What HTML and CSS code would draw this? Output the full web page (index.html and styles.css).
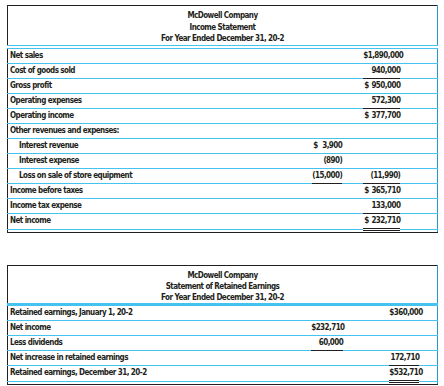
FILE: index.html
```html
<!DOCTYPE html>
<html lang="en">
<head>
    <meta charset="UTF-8">
    <meta name="viewport" content="width=device-width, initial-scale=1.0">
    <title>McDowell Company Statements</title>
    <link rel="stylesheet" href="styles.css">
</head>
<body>
    <table class="statement income">
        <colgroup>
            <col class="col-label">
            <col class="col-mid">
            <col class="col-gap">
            <col class="col-right">
            <col class="col-end">
        </colgroup>
        <thead>
            <tr>
                <th colspan="5" class="heading">
                    McDowell Company<br>
                    Income Statement<br>
                    For Year Ended December 31, 20-2
                </th>
            </tr>
        </thead>
        <tbody>
            <tr><td>Net sales</td><td></td><td></td><td class="amt">$1,890,000</td><td></td></tr>
            <tr><td>Cost of goods sold</td><td></td><td></td><td class="amt rule">940,000</td><td></td></tr>
            <tr><td>Gross profit</td><td></td><td></td><td class="amt"><span class="cur">$</span>950,000</td><td></td></tr>
            <tr><td>Operating expenses</td><td></td><td></td><td class="amt rule">572,300</td><td></td></tr>
            <tr><td>Operating income</td><td></td><td></td><td class="amt"><span class="cur">$</span>377,700</td><td></td></tr>
            <tr><td>Other revenues and expenses:</td><td></td><td></td><td></td><td></td></tr>
            <tr><td class="indent">Interest revenue</td><td class="amt"><span class="cur">$</span>3,900</td><td></td><td></td><td></td></tr>
            <tr><td class="indent">Interest expense</td><td class="amt">(890)</td><td></td><td></td><td></td></tr>
            <tr><td class="indent">Loss on sale of store equipment</td><td class="amt rule">(15,000)</td><td></td><td class="amt rule">(11,990)</td><td></td></tr>
            <tr><td>Income before taxes</td><td></td><td></td><td class="amt"><span class="cur">$</span>365,710</td><td></td></tr>
            <tr><td>Income tax expense</td><td></td><td></td><td class="amt rule">133,000</td><td></td></tr>
            <tr><td>Net income</td><td></td><td></td><td class="amt double"><span class="cur">$</span>232,710</td><td></td></tr>
            <tr class="tail"><td colspan="5"></td></tr>
        </tbody>
    </table>

    <table class="statement retained">
        <colgroup>
            <col class="col-label">
            <col class="col-mid">
            <col class="col-gap">
            <col class="col-right">
            <col class="col-end">
        </colgroup>
        <thead>
            <tr>
                <th colspan="5" class="heading">
                    McDowell Company<br>
                    Statement of Retained Earnings<br>
                    For Year Ended December 31, 20-2
                </th>
            </tr>
        </thead>
        <tbody>
            <tr><td>Retained earnings, January 1, 20-2</td><td></td><td></td><td class="amt">$360,000</td><td></td></tr>
            <tr><td>Net income</td><td class="amt">$232,710</td><td></td><td></td><td></td></tr>
            <tr><td>Less dividends</td><td class="amt rule">60,000</td><td></td><td></td><td></td></tr>
            <tr><td>Net increase in retained earnings</td><td></td><td></td><td class="amt rule">172,710</td><td></td></tr>
            <tr><td>Retained earnings, December 31, 20-2</td><td></td><td></td><td class="amt double">$532,710</td><td></td></tr>
            <tr class="tail"><td colspan="5"></td></tr>
        </tbody>
    </table>
</body>
</html>
```

FILE: styles.css
```css
* {
    margin: 0;
    padding: 0;
    box-sizing: border-box;
}

body {
    background-color: #fff;
    color: #231f20;
    font-family: "DejaVu Sans Condensed", "DejaVu Sans", sans-serif;
    font-weight: bold;
    font-size: 8px;
    letter-spacing: -0.55px;
    padding: 5px 0 0 7px;
}

.statement {
    width: 431px;
    border-collapse: collapse;
    table-layout: fixed;
    border: 1px solid #231f20;
    border-right-color: #2d93cf;
}

.retained {
    margin-top: 32px;
}

.statement td {
    height: 15px;
    padding: 0 0 0 2px;
    border-bottom: 1px solid #45c3ef;
    white-space: nowrap;
    line-height: 14px;
}

.statement td.indent {
    padding-left: 11px;
}

.statement td.amt {
    text-align: right;
    padding: 0;
}

.statement td.rule {
    border-bottom-color: #231f20;
}

.statement td.double {
    border-bottom: 3px double #231f20;
}

.statement tr.tail td {
    height: 3px;
    border-bottom: none;
}

.cur {
    float: left;
    padding-left: 1px;
}

.heading {
    font-weight: bold;
    text-align: center;
    line-height: 11.5px;
    padding: 4px 0 0;
    border-bottom: 4px double #45c3ef;
}

.retained .heading {
    line-height: 11px;
    padding: 4px 0 0;
    border-bottom: 3px solid #45c3ef;
}

.income .col-label { width: 304px; }
.income .col-mid { width: 30px; }
.income .col-gap { width: 21px; }
.income .col-right { width: 37px; }
.income .col-end { width: 37px; }

.retained .col-label { width: 303px; }
.retained .col-mid { width: 32px; }
.retained .col-gap { width: 46px; }
.retained .col-right { width: 30px; }
.retained .col-end { width: 18px; }
```
